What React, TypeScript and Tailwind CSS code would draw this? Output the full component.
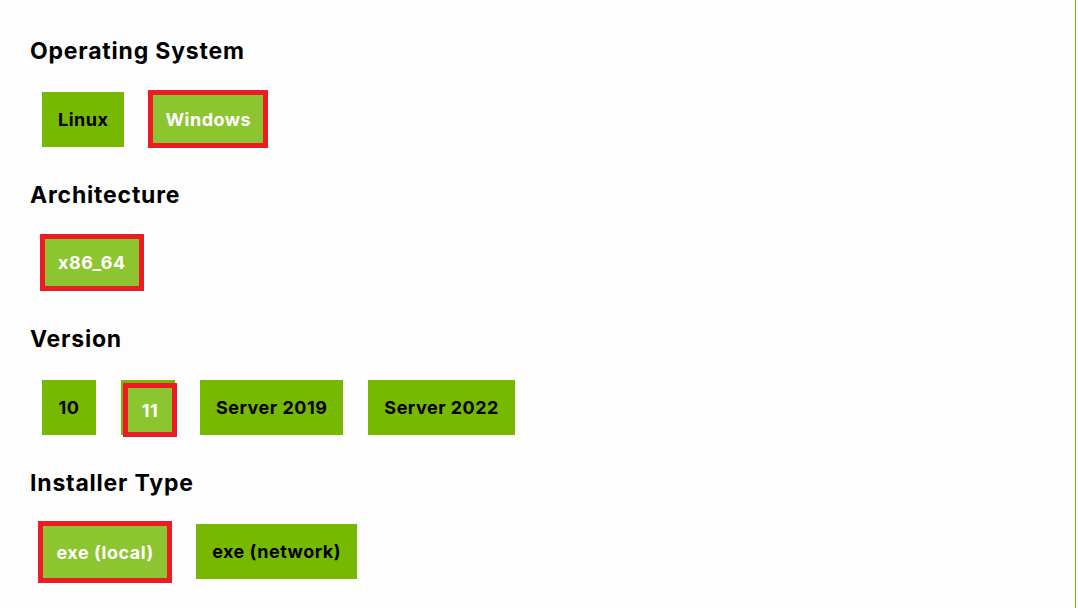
import React from "react";

type Opt = { label: string; selected?: boolean; overlay?: string };

const SECTIONS: { title: string; options: Opt[] }[] = [
  {
    title: "Operating System",
    options: [
      { label: "Linux" },
      { label: "Windows", selected: true, overlay: "-top-[2px] -left-[1px] -right-[1px] -bottom-[1px]" },
    ],
  },
  {
    title: "Architecture",
    options: [{ label: "x86_64", selected: true, overlay: "-top-[2px] -left-[2px] -right-[2px] bottom-0" }],
  },
  {
    title: "Version",
    options: [
      { label: "10" },
      { label: "11", selected: true, overlay: "top-[3px] left-[2px] -right-[2px] -bottom-[2px]" },
      { label: "Server 2019" },
      { label: "Server 2022" },
    ],
  },
  {
    title: "Installer Type",
    options: [
      { label: "exe (local)", selected: true, overlay: "-top-[3px] -left-[4px] -right-[1px] -bottom-[4px]" },
      { label: "exe (network)" },
    ],
  },
];

function OptionButton({ opt }: { opt: Opt }) {
  return (
    <div className="relative flex h-[55px] min-w-[54px] items-center justify-center bg-[#76b900] px-[16px] text-[18px] font-bold tracking-[0.5px] text-black">
      <span className={opt.selected ? "invisible" : ""}>{opt.label}</span>
      {opt.selected && (
        <span
          className={`absolute flex items-center justify-center border-[5px] border-[#ed1c24] bg-[#8dc530] text-white ${opt.overlay}`}
        >
          {opt.label}
        </span>
      )}
    </div>
  );
}

export default function App() {
  return (
    <div className="flex h-[608px] w-[1079px] bg-white" style={{ fontFamily: "Inter, 'Noto Sans', sans-serif" }}>
      <div className="w-[1076px] border-r border-[#76b900] bg-[#fdfdfd] px-[30px] pt-[37px]">
        {SECTIONS.map((s) => (
          <section key={s.title} className="mb-[34px]">
            <h2 className="h-[28px] text-[23px] leading-[28px] font-bold tracking-[0.8px] text-black">{s.title}</h2>
            <div className="mt-[27px] flex gap-[25px] pl-[12px]">
              {s.options.map((o) => (
                <OptionButton key={o.label} opt={o} />
              ))}
            </div>
          </section>
        ))}
      </div>
    </div>
  );
}
